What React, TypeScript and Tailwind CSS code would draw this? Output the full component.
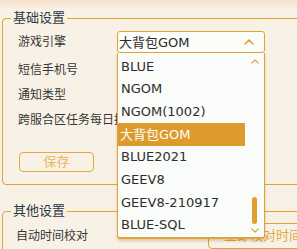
const engines = [
  "BLUE",
  "NGOM",
  "NGOM(1002)",
  "大背包GOM",
  "BLUE2021",
  "GEEV8",
  "GEEV8-210917",
  "BLUE-SQL",
];

const selected = "大背包GOM";

function Chevron({ up, className }: { up?: boolean; className?: string }) {
  return (
    <svg viewBox="0 0 10 6" className={className} fill="none">
      <path
        d={up ? "M1 5 L5 1 L9 5" : "M1 1 L5 5 L9 1"}
        stroke="#e0a13a"
        strokeWidth="1.6"
        strokeLinecap="round"
        strokeLinejoin="round"
      />
    </svg>
  );
}

function Row({ label }: { label: string }) {
  return (
    <div className="flex h-[25px] items-center">
      <span className="w-[99px] shrink-0 overflow-hidden whitespace-nowrap text-[12px] text-[#363636]">
        {label}
      </span>
    </div>
  );
}

function EngineSelect() {
  return (
    <div className="relative w-[148px]">
      <div className="flex h-[22px] items-center justify-between rounded-[3px] border border-[#e2a236] bg-[#fbfdf9] pl-[1px] pr-[10px]">
        <span className="text-[13px] leading-none text-[#2a2a2a]">{selected}</span>
        <Chevron up className="h-[6px] w-[10px]" />
      </div>
      <div className="absolute left-0 top-full z-10 flex h-[186px] w-[148px] rounded-b-[3px] border-x border-b-2 border-[#e2a236] bg-[#f9fcf8] shadow-[0_2px_3px_rgba(120,80,20,0.25)]">
        <ul className="flex-1 pt-[2px]">
          {engines.map((name) => (
            <li
              key={name}
              className={
                name === selected
                  ? "flex h-[22.7px] items-center bg-[#dc9b2c] pl-[2px] text-[13px] text-white"
                  : "flex h-[22.7px] items-center pl-[3px] text-[13px] text-[#2e2e2e]"
              }
            >
              {name}
            </li>
          ))}
        </ul>
        <div className="flex w-[19px] flex-col items-center pb-[4px] pt-[6px]">
          <Chevron up className="h-[5px] w-[8px]" />
          <div className="flex-1" />
          <div className="h-[27px] w-[5px] rounded-full bg-[#e0a030]" />
          <Chevron className="mt-[4px] h-[5px] w-[8px]" />
        </div>
      </div>
    </div>
  );
}

export default function App() {
  return (
    <div
      className="relative h-[249px] w-[297px] overflow-hidden bg-[#f8f2e6]"
      style={{ fontFamily: '"DejaVu Sans", "Noto Sans CJK SC", sans-serif' }}
    >
      <div className="h-[8px] bg-gradient-to-b from-[#f6e2cc] to-[#f8eedf]" />

      <fieldset className="ml-[2px] mt-[1px] h-[176px] w-[330px] rounded-[4px] border border-[#e2a236] pl-[15px]">
        <legend className="ml-[-7px] px-[2px] text-[13px] leading-[18px] text-[#2b3748]">
          基础设置
        </legend>
        <div className="mt-[4px] flex h-[22px] items-center">
          <span className="w-[99px] shrink-0 text-[12px] text-[#363636]">游戏引擎</span>
          <EngineSelect />
        </div>
        <div className="mt-[4px]">
          <Row label="短信手机号" />
          <Row label="通知类型" />
          <Row label="跨服合区任务每日执行时间" />
        </div>
        <button className="ml-[1px] mt-[20px] flex h-[20px] w-[75px] items-center justify-center rounded-[4px] border border-[#e6aa45] text-[13px] text-[#e9b666]">
          保存
        </button>
      </fieldset>

      <fieldset className="ml-[2px] mt-[17px] h-[60px] w-[330px] rounded-[4px] border border-[#e2a236] pl-[13px]">
        <legend className="ml-[-5px] px-[2px] text-[13px] leading-[18px] text-[#2b3748]">
          其他设置
        </legend>
        <div className="mt-[4px] flex h-[24px] items-center">
          <span className="w-[192px] shrink-0 text-[12px] text-[#363636]">自动时间校对</span>
          <button className="flex h-[26px] w-[120px] items-center rounded-[4px] border border-[#e2a236] pl-[15px] text-[13px] text-[#e2a648]">
            立即校对时间
          </button>
        </div>
      </fieldset>
    </div>
  );
}
